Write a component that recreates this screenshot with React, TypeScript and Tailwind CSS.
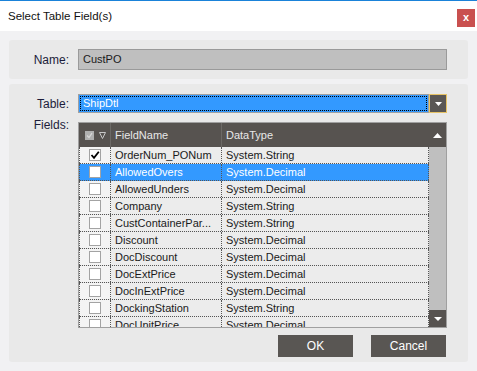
import React from "react";

const rows: { name: string; type: string; checked?: boolean; selected?: boolean }[] = [
  { name: "OrderNum_PONum", type: "System.String", checked: true },
  { name: "AllowedOvers", type: "System.Decimal", selected: true },
  { name: "AllowedUnders", type: "System.Decimal" },
  { name: "Company", type: "System.String" },
  { name: "CustContainerPar...", type: "System.String" },
  { name: "Discount", type: "System.Decimal" },
  { name: "DocDiscount", type: "System.Decimal" },
  { name: "DocExtPrice", type: "System.Decimal" },
  { name: "DocInExtPrice", type: "System.Decimal" },
  { name: "DockingStation", type: "System.String" },
  { name: "DocUnitPrice", type: "System.Decimal" },
];

function Check({ checked }: { checked?: boolean }) {
  return (
    <div className="w-[12px] h-[12px] bg-white border border-[#a3a3a3] flex items-center justify-center">
      {checked && (
        <svg width="10" height="10" viewBox="0 0 10 10">
          <path d="M1.5 5 L4 7.8 L8.8 1.8" stroke="#000" strokeWidth="1.8" fill="none" />
        </svg>
      )}
    </div>
  );
}

export default function App() {
  return (
    <div
      className="w-[477px] h-[371px] bg-[#f1f1f3] border-t border-[#1a82d9] flex flex-col overflow-hidden"
      style={{ fontFamily: '"Liberation Sans", Arial, sans-serif' }}
    >
      {/* Title bar */}
      <div className="h-[30px] bg-white flex items-start justify-between pl-[8px] pr-[2px]">
        <span className="text-[11.5px] text-[#111] leading-[30px]">Select Table Field(s)</span>
        <div className="mt-[8px] w-[18px] h-[18px] bg-[#c9504f] flex items-center justify-center text-white text-[11px] font-bold leading-none pb-[2px]">
          x
        </div>
      </div>

      <div className="flex flex-col px-[9px] pt-[9px] gap-[5px]">
        {/* Name panel */}
        <div className="h-[39px] rounded-[3px] bg-[#e9e9e9] flex items-center">
          <div className="w-[60px] text-right text-[12px] text-[#1c1c3a] leading-[14px]">Name:</div>
          <div className="ml-[9px] w-[369px] h-[21px] bg-[#bfbfbf] border border-[#9a9a9a] flex items-center pl-[4px] text-[11px] text-[#1a1a1a]">
            CustPO
          </div>
        </div>

        {/* Table panel */}
        <div className="h-[278px] rounded-[3px] bg-[#e9e9e9] flex flex-col pt-[10px] pb-[5px]">
          <div className="flex items-center h-[19px]">
            <div className="w-[60px] text-right text-[12px] text-[#1c1c3a] leading-[14px]">Table:</div>
            <div className="ml-[9px] w-[369px] h-[19px] flex">
              <div className="flex-1 bg-[#3399ff] border border-[#a0a0a0] p-[1px]">
                <div className="h-full border border-dotted border-[#000] flex items-center pl-[2px] text-[11px] text-white">
                  ShipDtl
                </div>
              </div>
              <div className="w-[18px] h-[19px] bg-[#5a5755] border border-[#e6c265] flex items-center justify-center">
                <svg width="7" height="4" viewBox="0 0 7 4">
                  <path d="M0 0 L7 0 L3.5 4 Z" fill="#fff" />
                </svg>
              </div>
            </div>
          </div>

          <div className="flex items-start mt-[9px]">
            <div className="w-[60px] text-right text-[12px] text-[#1c1c3a] leading-[14px] -mt-[4px]">Fields:</div>
            <div className="ml-[9px] w-[369px] h-[206px] border border-[#a0a0a0] flex text-[11px]">
              <div className="flex-1 flex flex-col min-w-0">
                {/* header */}
                <div className="h-[24px] bg-[#575350] flex text-[#e8e8e8]">
                  <div className="w-[32px] flex items-center pl-[6px] gap-[5px] border-r border-[#6c6966]">
                    <div className="w-[9px] h-[9px] bg-[#b0b0b0] flex items-center justify-center">
                      <svg width="7" height="7" viewBox="0 0 7 7">
                        <path d="M1 3.5 L3 5.5 L6 1.2" stroke="#d8d8d8" strokeWidth="1.3" fill="none" />
                      </svg>
                    </div>
                    <svg width="7" height="7" viewBox="0 0 7 7">
                      <path d="M0.5 0.5 L6.5 0.5 L3.5 6.5 Z" stroke="#c8c8c8" strokeWidth="1" fill="none" />
                    </svg>
                  </div>
                  <div className="w-[111px] flex items-center pl-[4px] border-r border-[#6c6966]">FieldName</div>
                  <div className="flex-1 flex items-center pl-[4px]">DataType</div>
                </div>
                {/* body */}
                <div className="h-[180px] overflow-hidden bg-[#e9e9e9]">
                  {rows.map((r) => (
                    <div
                      key={r.name}
                      className={`h-[17px] flex border-b border-dotted border-[#555] ${
                        r.selected ? "bg-[#3399ff] text-white" : "text-[#1a1a1a]"
                      }`}
                    >
                      <div
                        className={`w-[32px] flex items-center justify-center border-r border-l border-dotted border-[#555] ${
                          r.selected ? "" : "bg-[#f4f4f4]"
                        }`}
                      >
                        <Check checked={r.checked} />
                      </div>
                      <div
                        className={`w-[111px] flex items-center pl-[4px] pr-[2px] border-r border-dotted border-[#555] whitespace-nowrap ${
                          r.selected ? "" : "bg-[#ececec]"
                        }`}
                      >
                        {r.name}
                      </div>
                      <div
                        className={`flex-1 flex items-center pl-[4px] border-r border-dotted border-[#555] ${
                          r.selected ? "" : "bg-[#ececec]"
                        }`}
                      >
                        {r.type}
                      </div>
                    </div>
                  ))}
                </div>
              </div>
              {/* scrollbar */}
              <div className="w-[17px] flex flex-col">
                <div className="h-[24px] bg-[#575350] flex items-center justify-center">
                  <svg width="9" height="5" viewBox="0 0 9 5">
                    <path d="M0 5 L9 5 L4.5 0 Z" fill="#fff" />
                  </svg>
                </div>
                <div className="flex-1 bg-[#bfbfbf]" />
                <div className="h-[17px] bg-[#575350] flex items-center justify-center">
                  <svg width="8" height="4" viewBox="0 0 8 4">
                    <path d="M0 0 L8 0 L4 4 Z" fill="#fff" />
                  </svg>
                </div>
              </div>
            </div>
          </div>

          <div className="flex justify-end gap-[18px] mt-[7px] pr-[22px]">
            <div className="w-[75px] h-[22px] bg-[#595653] text-white text-[12px] flex items-center justify-center">OK</div>
            <div className="w-[75px] h-[22px] bg-[#595653] text-white text-[12px] flex items-center justify-center">Cancel</div>
          </div>
        </div>
      </div>
    </div>
  );
}
